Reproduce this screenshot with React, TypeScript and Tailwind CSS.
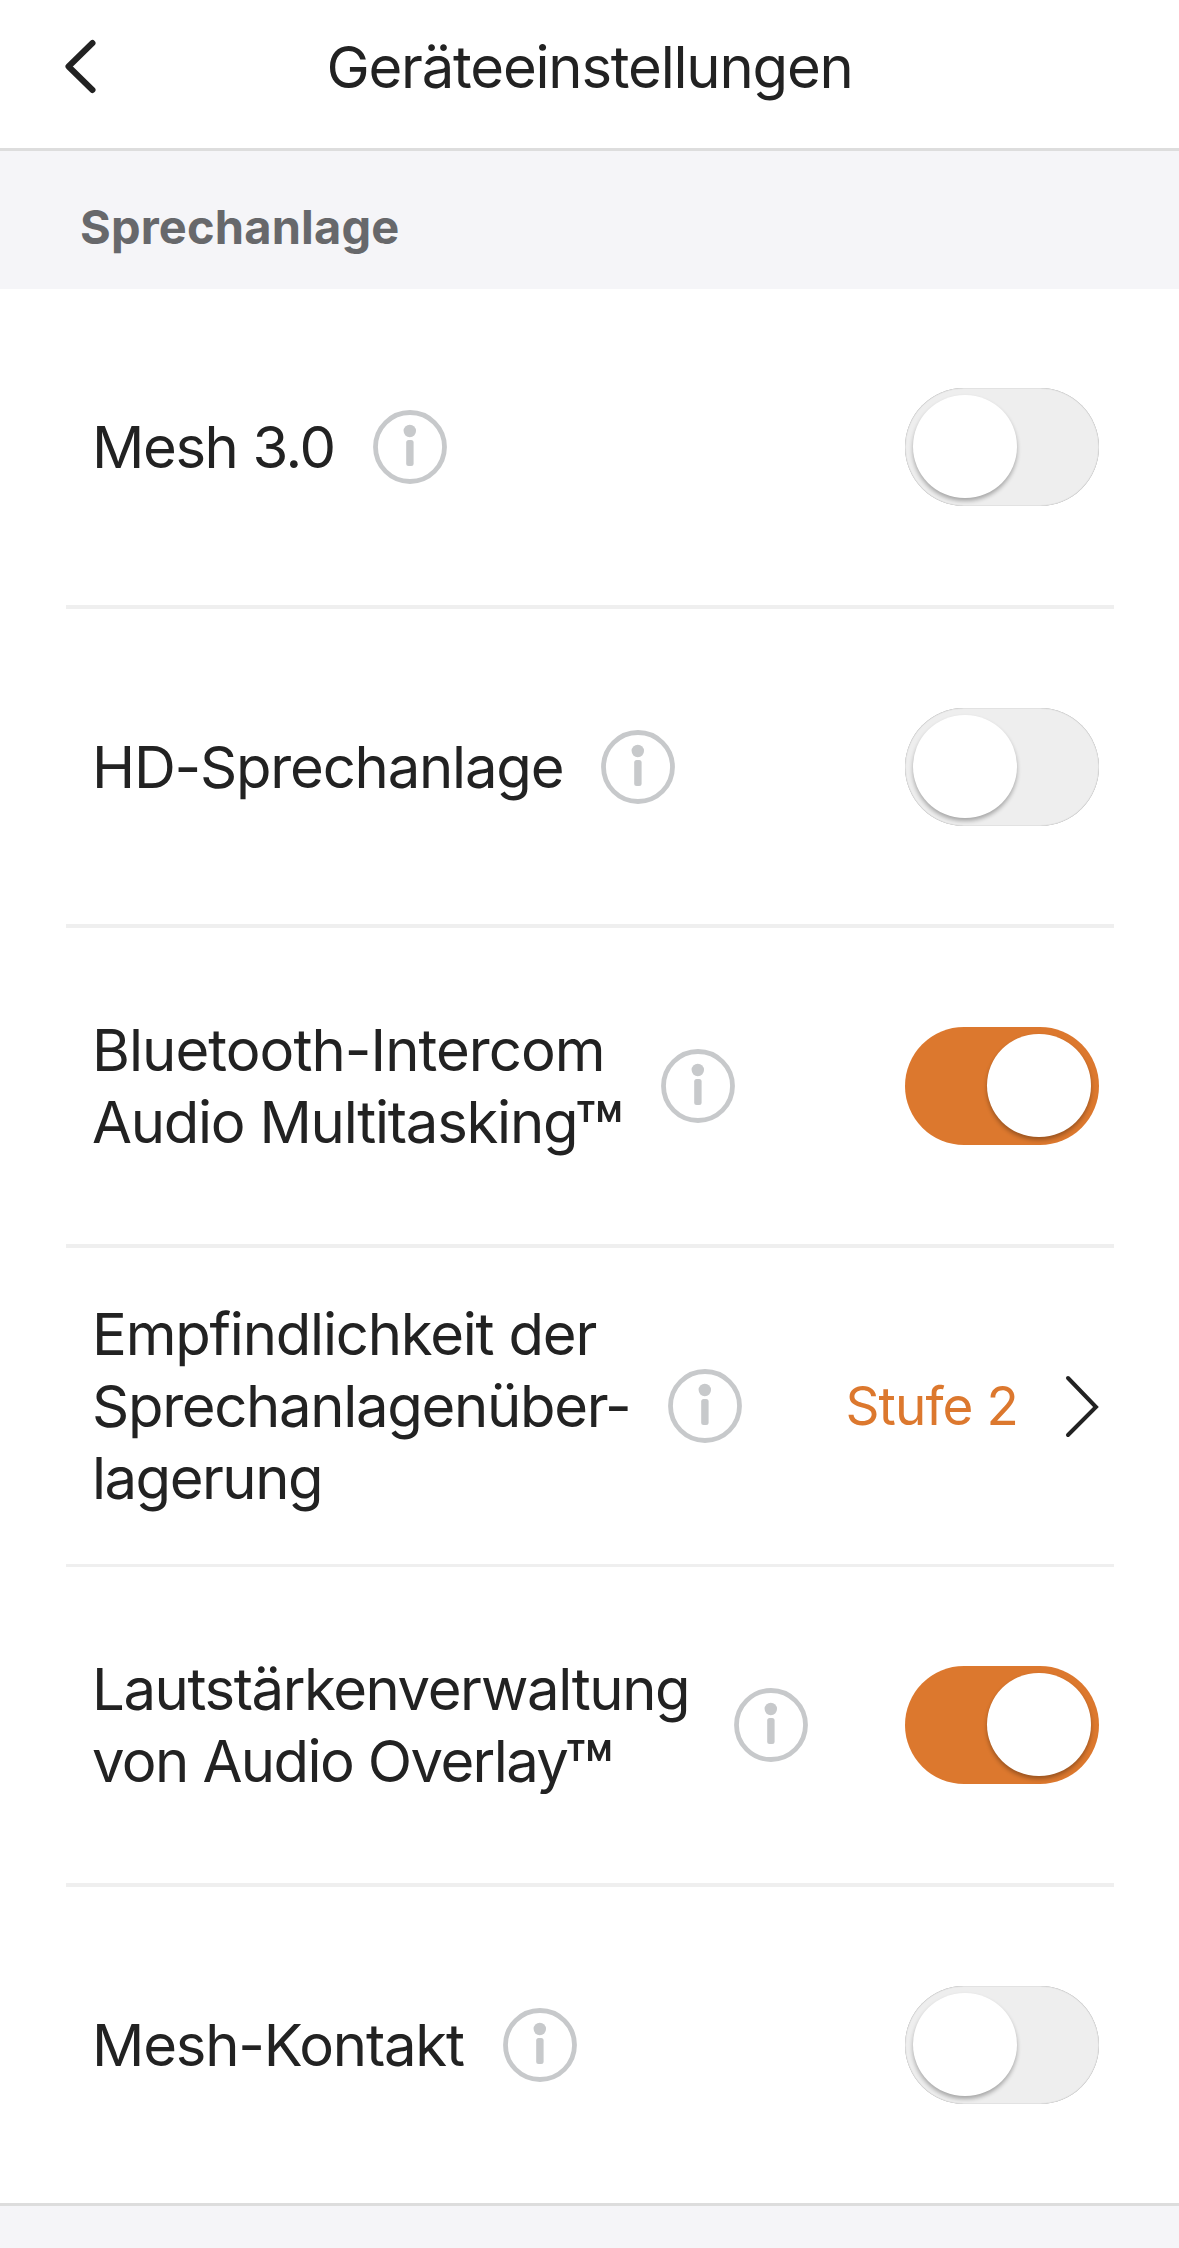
import { clsx } from "clsx";

type Line = { text: string; className: string; trademark?: boolean };

type Setting = {
  lines: Line[];
  labelWidth: string;
  rowHeight: string;
  enabled?: boolean;
  value?: string;
};

const settings: Setting[] = [
  {
    lines: [{ text: "Mesh 3.0", className: "tracking-[-1.4px]" }],
    labelWidth: "w-[281px]",
    rowHeight: "h-[320px] border-b-4",
    enabled: false,
  },
  {
    lines: [{ text: "HD-Sprechanlage", className: "tracking-[-1.2px]" }],
    labelWidth: "w-[509px]",
    rowHeight: "h-[319px] border-b-4",
    enabled: false,
  },
  {
    lines: [
      { text: "Bluetooth-Intercom", className: "tracking-[-0.95px]" },
      {
        text: "Audio Multitasking",
        className: "tracking-[-1.25px]",
        trademark: true,
      },
    ],
    labelWidth: "w-[568.5px]",
    rowHeight: "h-[320px] border-b-4",
    enabled: true,
  },
  {
    lines: [
      { text: "Empfindlichkeit der", className: "tracking-[-1.2px]" },
      { text: "Sprechanlagenüber-", className: "tracking-[-1.3px]" },
      { text: "lagerung", className: "tracking-[-1.5px]" },
    ],
    labelWidth: "w-[575.5px]",
    rowHeight: "h-[319px] border-b-3",
    value: "Stufe 2",
  },
  {
    lines: [
      { text: "Lautstärkenverwaltung", className: "tracking-[-1.4px]" },
      {
        text: "von Audio Overlay",
        className: "tracking-[-1.6px]",
        trademark: true,
      },
    ],
    labelWidth: "w-[642px]",
    rowHeight: "h-[320px] border-b-4",
    enabled: true,
  },
  {
    lines: [{ text: "Mesh-Kontakt", className: "tracking-[-1.2px]" }],
    labelWidth: "w-[411px]",
    rowHeight: "h-[316px]",
    enabled: false,
  },
];

function InfoIcon() {
  return (
    <svg className="size-[74px] shrink-0" viewBox="0 0 74 74" fill="none">
      <circle cx="37" cy="37" r="34.5" stroke="#c7c9cb" strokeWidth="4.8" />
      <circle cx="36.8" cy="21" r="6.2" fill="#c7c9cb" />
      <rect x="33.2" y="30" width="7.4" height="26" rx="2.5" fill="#c7c9cb" />
    </svg>
  );
}

function Toggle({ enabled }: { enabled: boolean }) {
  return (
    <button
      role="switch"
      aria-checked={enabled}
      className={clsx(
        "flex items-center w-[194px] h-[118px] rounded-full px-2 shrink-0",
        enabled
          ? "bg-[#dc782e] justify-end"
          : "bg-[#eeeeee] justify-start shadow-[inset_0_0_1px_#777777]"
      )}
    >
      <span className="w-[104px] h-[103px] -mt-[1px] rounded-full bg-white shadow-[0_3px_4px_rgba(0,0,0,0.3)]" />
    </button>
  );
}

function SettingRow({ setting }: { setting: Setting }) {
  return (
    <div
      className={clsx(
        "ml-[66px] mr-[65px] pl-[26px] pr-[15px] flex items-center border-[#efefef]",
        setting.rowHeight
      )}
    >
      <div
        className={clsx(
          "shrink-0 text-[58px] leading-[72px] whitespace-nowrap text-[#222222]",
          setting.labelWidth
        )}
      >
        {setting.lines.map((line) => (
          <span
            key={line.text}
            className={clsx("block h-[72px]", line.className)}
          >
            {line.text}
            {line.trademark && (
              <span className="text-[80px] font-medium leading-0 align-[-16px] -ml-[3px]">
                ™
              </span>
            )}
          </span>
        ))}
      </div>
      <InfoIcon />
      <div className="ml-auto flex items-center">
        {setting.value ? (
          <>
            <span className="text-[53px] leading-[64px] tracking-[-0.9px] text-[#dc782e] whitespace-nowrap mr-[47px]">
              {setting.value}
            </span>
            <svg className="w-[34px] h-[64px]" viewBox="0 0 34 64" fill="none">
              <path
                d="M3 4 31 33 3 61"
                stroke="#222222"
                strokeWidth="4"
                strokeLinecap="round"
              />
            </svg>
          </>
        ) : (
          <Toggle enabled={!!setting.enabled} />
        )}
      </div>
    </div>
  );
}

export default function App() {
  return (
    <main className="w-[1179px] h-[2248px] overflow-hidden bg-white font-['Inter',sans-serif] flex flex-col">
      <header className="h-[151px] shrink-0 border-b-3 border-[#dddddd] grid grid-cols-[1fr_auto_1fr] items-start">
        <button className="ml-[60px] mt-[36px] w-[40px]" aria-label="Zurück">
          <svg className="w-[40px] h-[60px]" viewBox="0 0 40 60" fill="none">
            <path
              d="M32.5 7 8.5 30.5 32.5 54"
              stroke="#222222"
              strokeWidth="6"
              strokeLinecap="round"
              strokeLinejoin="round"
            />
          </svg>
        </button>
        <h1 className="mt-[31px] text-[58px] leading-[72px] tracking-[-1.2px] text-[#222222]">
          Geräteeinstellungen
        </h1>
      </header>

      <h2 className="h-[138px] shrink-0 bg-[#f5f5f8] pl-[80px] pt-[14px] flex items-center text-[47px] font-bold tracking-[0.15px] text-[#67686b]">
        Sprechanlage
      </h2>

      <section className="shrink-0">
        {settings.map((setting) => (
          <SettingRow key={setting.lines[0].text} setting={setting} />
        ))}
      </section>

      <div className="flex-1 border-t-3 border-[#dddddd] bg-[#f5f5f8]" />
    </main>
  );
}
